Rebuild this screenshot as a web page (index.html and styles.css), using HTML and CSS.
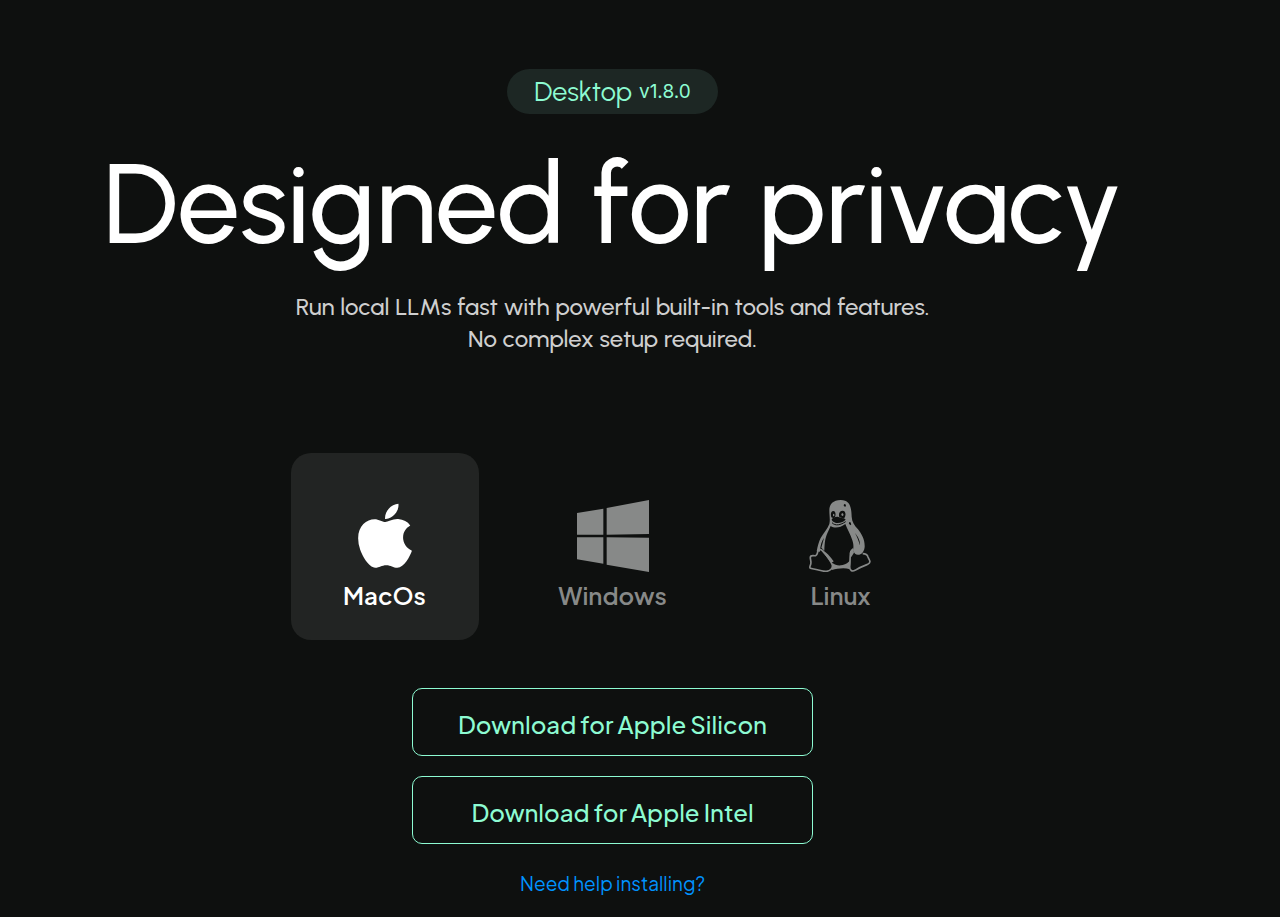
FILE: index.html
```html
<!DOCTYPE html>
<html lang="en">
<head>
    <meta charset="UTF-8">
    <meta name="viewport" content="width=device-width, initial-scale=1.0">
    <title>Desktop download</title>
    <link rel="stylesheet" href="styles.css">
</head>
<body>

<main class="download">
    <div class="badge">Desktop <span class="version">v1.8.0</span></div>
    <h1>Designed for privacy</h1>
    <p class="subtitle">Run local LLMs fast with powerful built-in tools and features.<br>No complex setup required.</p>

    <!-- Platforms -->
    <div class="platforms">
        <button type="button" class="platform active">
            <svg class="icon" viewBox="-60 6 504 504" aria-hidden="true">
                <path d="M318.7 268.7c-.2-36.7 16.4-64.4 50-84.8-18.8-26.9-47.2-41.7-84.7-44.6-35.5-2.8-74.3 20.7-88.5 20.7-15 0-49.4-19.7-76.4-19.7C63.3 141.2 4 184.8 4 273.5q0 39.3 14.4 81.2c12.8 36.7 59 126.7 107.2 125.2 25.2-.6 43-17.9 75.8-17.9 31.8 0 48.3 17.9 76.4 17.9 48.6-.7 90.4-82.5 102.6-119.3-65.2-30.7-61.7-90-61.7-91.9zm-56.6-164.2c27.3-32.4 24.8-61.9 24-72.5-24.1 1.4-52 16.4-67.9 34.9-17.5 19.8-27.8 44.3-25.6 71.9 26.1 2 49.9-11.4 69.5-34.3z"/>
            </svg>
            MacOs
        </button>
        <button type="button" class="platform">
            <svg class="icon" viewBox="80 30 216 216" aria-hidden="true">
                <path d="M80 69L159 56V134H80zM169 54L296 30V132L169 134zM80 142H159V221L80 208zM169 142L296 143V246L169 224z"/>
            </svg>
            Windows
        </button>
        <button type="button" class="platform">
            <svg class="icon" viewBox="15 29 216 216" aria-hidden="true">
                <!-- head and arms -->
                <path fill-rule="evenodd" d="M122 29C99 29 88 42 88 60C88 77 91 88 88 101C83 116 70 128 62 143C56 155 53 167 50 183L60 184C61 166 65 151 72 143L64 172L73 181C74 154 76 143 82 129L92 107C103 115 120 113 136 101C141 116 152 132 157 150C161 163 161 170 159 180C163 191 169 195 178 193C187 191 193 181 194 170C195 148 185 131 174 117C163 105 156 95 155 79C154 48 149 29 122 29zM100 62C93 62 91 71 94 81L101 84L105 80C108 72 107 62 100 62zM128 61C118 61 115 71 118 80L132 85C139 76 138 61 128 61zM149 95C145 96 146 103 153 105C154 100 153 96 149 95zM165 128C173 137 181 151 180 165C176 151 171 138 165 128zM134 41C129 43 131 49 136 49C139 46 138 42 134 41z"/>
                <path d="M101 70C104 70 104 78 101 78C98 77 98 71 101 70zM126 69C131 68 132 77 128 77C123 77 123 71 126 69z"/>
                <!-- beak -->
                <path class="cutout" d="M95 87C99 82 108 78 115 80C121 82 131 83 137 87C132 96 120 99 108 98C101 96 95 93 95 87z"/>
                <path class="cutout-line" d="M96 97C106 108 122 104 137 94"/>
                <!-- feet -->
                <path class="stroke" d="M55 180C51 187 53 194 47 196C39 197 32 193 31 201C30 208 36 215 31 225C27 234 31 235 41 236C58 239 69 244 79 243C91 242 99 234 97 224C90 206 76 192 68 181C64 177 58 176 55 180zM153 182C149 194 151 213 149 229C149 240 156 245 165 240C179 231 190 227 203 222C216 215 207 209 204 200C202 192 195 190 188 190"/>
                <path d="M58 176C78 181 94 203 101 213C97 219 91 215 87 209C79 198 70 187 58 176zM97 217C106 225 116 227 128 224C138 222 145 217 151 210L150 237C132 231 112 235 96 239z"/>
                <path d="M153 178C148 185 148 194 154 200L162 187L159 173z"/>
            </svg>
            Linux
        </button>
    </div>

    <!-- Downloads -->
    <div class="downloads">
        <a href="#apple-silicon" class="download-button">Download for Apple Silicon</a>
        <a href="#apple-intel" class="download-button">Download for Apple Intel</a>
    </div>
    <a href="#help" class="help">Need help installing?</a>
</main>

</body>
</html>
```

FILE: styles.css
```css
body {
    margin: 0;
    padding: 69px 55px 20px 0;
    background-color: #0e100f;
    color: white;
    font-family: Urbanist, Lato, sans-serif;
    font-weight: 500;
}
.download {
    display: flex;
    flex-direction: column;
    align-items: center;
}
.badge {
    display: flex;
    align-items: center;
    gap: 7px;
    padding: 0 27px;
    border-radius: 23px;
    background-color: #1d2724;
    color: #8dfbd2;
    font-size: 27px;
    font-weight: 400;
    line-height: 45px;
}
.version {
    font-family: Inter, sans-serif;
    font-size: 19px;
}
h1 {
    margin: 23px 0 20px;
    font-size: 112px;
    font-weight: 500;
    line-height: 134px;
    text-align: center;
}
.subtitle {
    margin: 0;
    color: #cfcfcf;
    font-size: 24px;
    line-height: 32px;
    text-align: center;
}
.platforms {
    display: flex;
    gap: 40px;
    margin-top: 98px;
}
.platform {
    display: flex;
    flex-direction: column;
    align-items: center;
    gap: 7px;
    width: 188px;
    height: 187px;
    padding: 47px 0 0;
    border: none;
    border-radius: 20px;
    background: none;
    color: #878988;
    font-family: "Plus Jakarta Sans", Lato, sans-serif;
    font-size: 24px;
    font-weight: 600;
    line-height: 32px;
    cursor: pointer;
}
.platform.active {
    background-color: #222423;
    color: white;
}
.icon {
    width: 72px;
    height: 72px;
    fill: currentColor;
}
.icon .stroke {
    fill: none;
    stroke: currentColor;
    stroke-width: 5;
}
.icon .cutout {
    fill: #0e100f;
}
.icon .cutout-line {
    fill: none;
    stroke: #0e100f;
    stroke-width: 3;
}
.downloads {
    display: flex;
    flex-direction: column;
    gap: 20px;
    width: 401px;
    max-width: 100%;
    margin-top: 48px;
}
.download-button {
    padding: 18px 0 14px;
    border: 1px solid #8dfbd2;
    border-radius: 10px;
    color: #8dfbd2;
    font-family: "Plus Jakarta Sans", Lato, sans-serif;
    font-size: 24px;
    line-height: 34px;
    text-align: center;
    text-decoration: none;
}
.help {
    margin-top: 26px;
    color: #0093ff;
    font-family: "Plus Jakarta Sans", Lato, sans-serif;
    font-size: 19px;
    font-weight: 400;
    line-height: 26px;
    text-decoration: none;
}
```
